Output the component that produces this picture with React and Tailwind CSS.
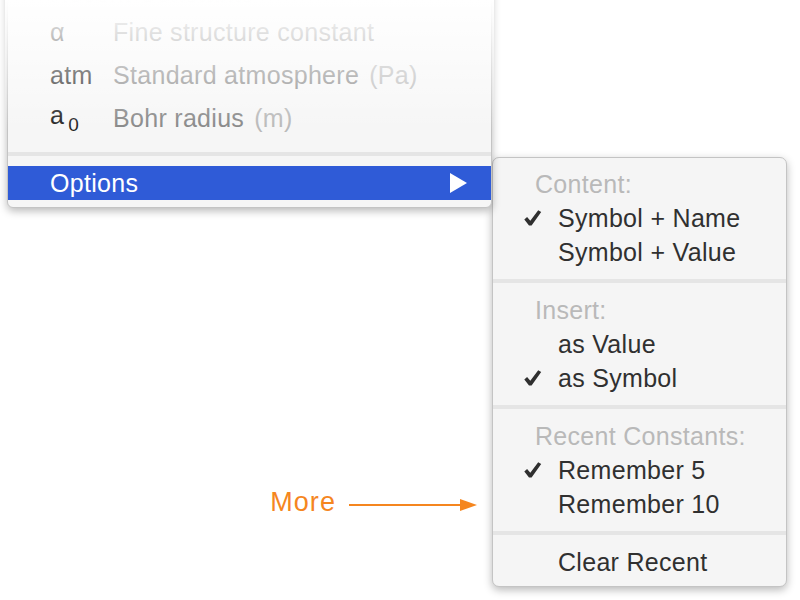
import React from "react";

const Check = () => (
  <svg width="18" height="16" viewBox="0 0 18 16" className="block">
    <path d="M0.3 9.4 L3.1 7.0 L6.3 10.8 L14.2 0.3 L17.2 2.0 L7.6 15.6 L5.0 15.6 Z" fill="#2f2f2f" />
  </svg>
);

const SubHeader = ({ children }) => (
  <div className="h-[34px] flex items-center pl-[42px] text-[#b9b9b9]">{children}</div>
);

const SubItem = ({ checked, children }) => (
  <div className="h-[34px] flex items-center text-[#303030]">
    <div className="w-[65px] flex justify-end pr-[16px]">{checked ? <Check /> : null}</div>
    <span>{children}</span>
  </div>
);

const SubSep = () => (
  <div className="h-[24px] pt-[10px]">
    <div className="h-[4px] bg-[#e5e5e5]" />
  </div>
);

const MainRow = ({ sym, name, unit }) => (
  <div className="h-[43px] flex items-center pl-[42px]">
    <span className="w-[63px] text-[#222]">{sym}</span>
    <span className="text-[#888]">{name}</span>
    {unit ? <span className="ml-[10px] text-[#b9b9b9]">{unit}</span> : null}
  </div>
);

export default function App() {
  return (
    <div className="w-[800px] h-[600px] bg-white overflow-hidden flex items-start font-['Liberation_Sans',Arial,sans-serif] text-[25px] leading-none tracking-[0.012em]">
      <div className="flex flex-col w-[485px] ml-[7px] shrink-0">
        <div className="relative mt-[-30px] bg-[#f6f6f6] border border-[#c4c4c4] rounded-b-[6px] shadow-[0_3px_8px_rgba(0,0,0,0.28)] pt-[4px] pb-[7px]">
          <div className="h-[36px] flex items-center pl-[42px] text-[#b9b9b9]">Recent Constants</div>
          <MainRow sym="α" name="Fine structure constant" />
          <MainRow sym="atm" name="Standard atmosphere" unit="(Pa)" />
          <div className="h-[43px] flex items-center pl-[42px]">
            <span className="w-[63px] text-[#222]">
              a<span className="text-[19px] ml-[4px] align-[-7px]">0</span>
            </span>
            <span className="text-[#888]">Bohr radius</span>
            <span className="ml-[10px] text-[#b9b9b9]">(m)</span>
          </div>
          <div className="h-[26px] pt-[12px]">
            <div className="h-[4px] bg-[#e5e5e5]" />
          </div>
          <div className="h-[34px] bg-[#2f5bd7] flex items-center justify-between pl-[42px] pr-[24px] text-white">
            <span>Options</span>
            <svg width="17" height="20" viewBox="0 0 17 20" className="block">
              <path d="M0 0 L17 10 L0 20 Z" fill="#fff" />
            </svg>
          </div>
          <div className="absolute left-[-3px] right-[-3px] top-[-1px] h-[190px] pointer-events-none bg-[linear-gradient(to_bottom,#fff_30px,rgba(255,255,255,0)_160px)]" />
        </div>
        <div className="mt-[279px] h-[30px] flex items-center justify-end pr-[15px] text-[#f5861f]">
          <span className="text-[27px] tracking-[0.04em]">More</span>
          <svg width="128" height="14" viewBox="0 0 128 14" className="block ml-[13px] mt-[5px]">
            <rect x="0" y="6" width="112" height="2" fill="#f5861f" />
            <path d="M111 1 L128 7 L111 13 Z" fill="#f5861f" />
          </svg>
        </div>
      </div>
      <div className="mt-[157px] w-[295px] shrink-0 bg-[#f5f5f5] border border-[#c4c4c4] rounded-[7px] shadow-[0_3px_9px_rgba(0,0,0,0.28)] pt-[9px] pb-[7px]">
        <SubHeader>Content:</SubHeader>
        <SubItem checked>Symbol + Name</SubItem>
        <SubItem>Symbol + Value</SubItem>
        <SubSep />
        <SubHeader>Insert:</SubHeader>
        <SubItem>as Value</SubItem>
        <SubItem checked>as Symbol</SubItem>
        <SubSep />
        <SubHeader>Recent Constants:</SubHeader>
        <SubItem checked>Remember 5</SubItem>
        <SubItem>Remember 10</SubItem>
        <SubSep />
        <SubItem>Clear Recent</SubItem>
      </div>
    </div>
  );
}
